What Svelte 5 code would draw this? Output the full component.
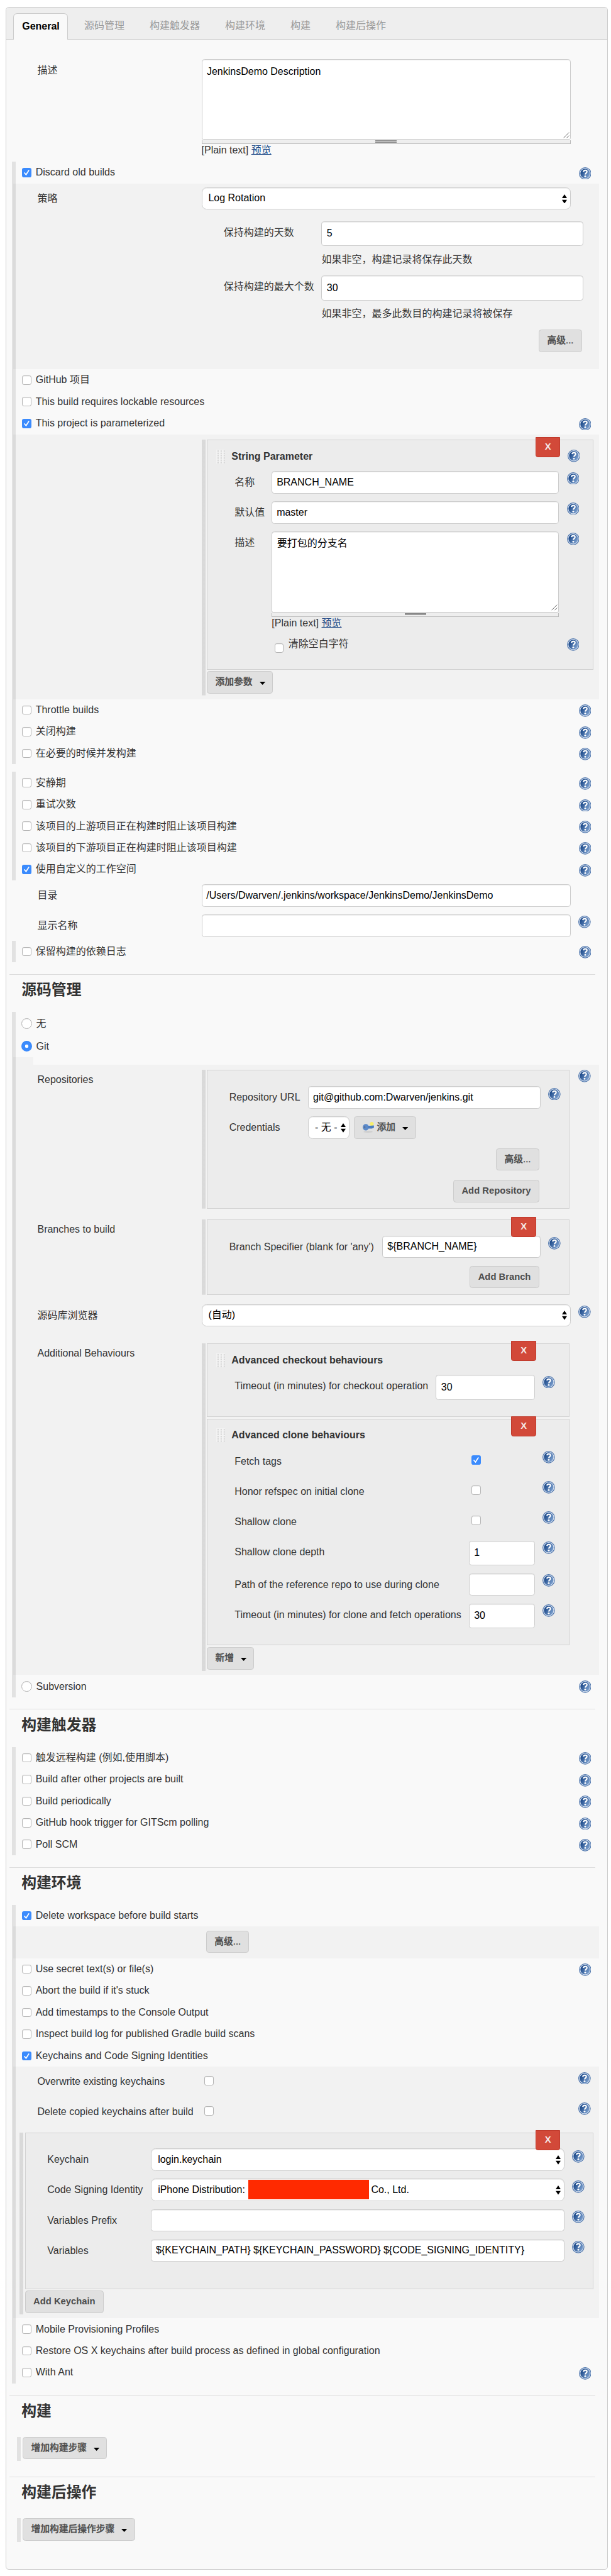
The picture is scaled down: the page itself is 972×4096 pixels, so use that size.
<script>
  const tabs = ['源码管理', '构建触发器', '构建环境', '构建', '构建后操作'];
  const concurrency = ['Throttle builds', '关闭构建', '在必要的时候并发构建'];
  const advanced = [
    { text: '安静期' },
    { text: '重试次数' },
    { text: '该项目的上游项目正在构建时阻止该项目构建' },
    { text: '该项目的下游项目正在构建时阻止该项目构建' },
    { text: '使用自定义的工作空间', on: true }
  ];
  const triggers = [
    '触发远程构建 (例如,使用脚本)',
    'Build after other projects are built',
    'Build periodically',
    'GitHub hook trigger for GITScm polling',
    'Poll SCM'
  ];
</script>

{#snippet help()}
  <svg class="help" viewBox="0 0 32 32">
    <defs>
      <linearGradient id="hg" x1="0" y1="0.2" x2="1" y2="0.8">
        <stop offset="0.15" stop-color="#1f4c8c" />
        <stop offset="1" stop-color="#86a9d6" />
      </linearGradient>
    </defs>
    <circle cx="16" cy="16" r="16" fill="#4a72aa" />
    <circle cx="16" cy="16" r="13.2" fill="url(#hg)" stroke="#d3deee" stroke-width="2" />
    <path d="M11.6 11.6c.4-2.7 2.2-3.9 4.6-3.9 2.6 0 4.5 1.4 4.5 3.8 0 3.2-4.3 3.4-4.3 7.2" fill="none" stroke="#fff" stroke-width="3.4" />
    <circle cx="16.2" cy="23.3" r="2.3" fill="#fff" />
  </svg>
{/snippet}

{#snippet box(on)}
  <span class="cb" class:on>
    {#if on}
      <svg viewBox="0 0 24 24"><path d="M6.5 13l4 4.6L17.5 6.5" fill="none" stroke="#fff" stroke-width="2.8" stroke-linecap="round" /></svg>
    {/if}
  </span>
{/snippet}

{#snippet opt(text, on, h)}
  <div class="opt">
    {@render box(on)}
    <span class="opt-text">{text}</span>
    {#if h}{@render help()}{/if}
  </div>
{/snippet}

{#snippet radio(text, on, h)}
  <div class="opt radio">
    <span class="rd" class:on></span>
    <span class="opt-text">{text}</span>
    {#if h}{@render help()}{/if}
  </div>
{/snippet}

{#snippet caret()}
  <svg class="caret" viewBox="0 0 15 8"><path d="M0 0h15L7.5 8z" /></svg>
{/snippet}

{#snippet arrows()}
  <svg class="arrows" viewBox="0 0 13 24"><path d="M0 9.8L6.5 0 13 9.8zM0 14.2L6.5 24 13 14.2z" /></svg>
{/snippet}

{#snippet select(text)}
  <div class="input select">{text}{@render arrows()}</div>
{/snippet}

{#snippet area(text)}
  <div class="area-wrap">
    <div class="area">
      {text}
      <svg class="grab" viewBox="0 0 16 16"><path d="M1 15L15 1M9 15l6-6" stroke="#666" stroke-width="1.6" /></svg>
    </div>
    <div class="strip"><i></i></div>
    <div class="plain">[Plain text] <a href="#preview">预览</a></div>
  </div>
{/snippet}

{#snippet head(text, h)}
  <div class="head">
    <span class="grip"></span>
    <b>{text}</b>
    {#if h}{@render help()}{/if}
  </div>
{/snippet}

{#snippet field(label, value, kind)}
  <div class="field {kind}">
    <span class="lbl">{label}</span>
    <div class="input">{value}</div>
    {@render help()}
  </div>
{/snippet}

{#snippet checkField(label, on)}
  <div class="field check">
    <span class="lbl">{label}</span>
    <div class="slot">{@render box(on)}</div>
    {@render help()}
  </div>
{/snippet}

<div class="panel">
  <nav class="tabs">
    <span class="tab active">General</span>
    {#each tabs as t}<span class="tab">{t}</span>{/each}
  </nav>

  <div class="field main first">
    <span class="lbl">描述</span>
    {@render area('JenkinsDemo Description')}
  </div>

  <div class="group">
    {@render opt('Discard old builds', true, true)}
    <div class="sub rotation">
      <div class="field main">
        <span class="lbl">策略</span>
        {@render select('Log Rotation')}
      </div>
      <div class="keep">
        <span class="lbl">保持构建的天数</span>
        <div><div class="input tall">5</div><p>如果非空，构建记录将保存此天数</p></div>
      </div>
      <div class="keep">
        <span class="lbl">保持构建的最大个数</span>
        <div><div class="input tall">30</div><p>如果非空，最多此数目的构建记录将被保存</p></div>
      </div>
      <div class="right"><span class="btn cjk">高级...</span></div>
    </div>
    {@render opt('GitHub 项目', false, false)}
    {@render opt('This build requires lockable resources', false, false)}
    {@render opt('This project is parameterized', true, true)}
    <div class="sub params">
      <div class="rep">
        <div class="box param-box">
          <span class="x">X</span>
          {@render head('String Parameter', true)}
          {@render field('名称', 'BRANCH_NAME', '')}
          {@render field('默认值', 'master', '')}
          <div class="field desc">
            <span class="lbl">描述</span>
            {@render area('要打包的分支名')}
            {@render help()}
          </div>
          <div class="field check trim">
            <span class="lbl"></span>
            <div class="slot">{@render box(false)}<span class="trim-text">清除空白字符</span></div>
            {@render help()}
          </div>
        </div>
        <span class="btn cjk">添加参数 {@render caret()}</span>
      </div>
    </div>
    {#each concurrency as c}{@render opt(c, false, true)}{/each}
  </div>

  <div class="group spaced">
    {#each advanced as a}{@render opt(a.text, a.on, true)}{/each}
  </div>

  <div class="pair">
    <div class="field main">
      <span class="lbl">目录</span>
      <div class="input">/Users/Dwarven/.jenkins/workspace/JenkinsDemo/JenkinsDemo</div>
    </div>
    {@render field('显示名称', '', 'main')}
  </div>

  <div class="group">{@render opt('保留构建的依赖日志', false, true)}</div>

  <h2>源码管理</h2>
  <div class="group">
    {@render radio('无', false, false)}
    {@render radio('Git', true, false)}
    <div class="sub stub"></div>
    <div class="sub git">
      <div class="line repos">
        <span class="lbl">Repositories</span>
        <div class="rep">
          <div class="box repo-box">
            {@render field('Repository URL', 'git@github.com:Dwarven/jenkins.git', '')}
            <div class="field">
              <span class="lbl">Credentials</span>
              {@render select('- 无 -')}
              <span class="btn cjk add">
                <svg class="key" viewBox="0 0 30 28">
                  <ellipse cx="14" cy="25.5" rx="12" ry="2" fill="#ccc" />
                  <circle cx="23.5" cy="5" r="5" fill="#f7ef6b" />
                  <ellipse cx="8" cy="13.5" rx="8" ry="8.3" fill="#5c8ac9" />
                  <path d="M13 10l16-1v6l-5 2-9 0z" fill="#4a7cc0" />
                  <ellipse cx="5" cy="13.5" rx="2" ry="3" fill="#5d7295" />
                </svg>添加 {@render caret()}
              </span>
            </div>
            <div class="right"><span class="btn cjk">高级...</span></div>
            <div class="right"><span class="btn">Add Repository</span></div>
          </div>
        </div>
        {@render help()}
      </div>
      <div class="line">
        <span class="lbl">Branches to build</span>
        <div class="rep">
          <div class="box branch-box">
            <span class="x">X</span>
            {@render field("Branch Specifier (blank for 'any')", '${BRANCH_NAME}', '')}
            <div class="right"><span class="btn">Add Branch</span></div>
          </div>
        </div>
      </div>
      <div class="field main browser">
        <span class="lbl">源码库浏览器</span>
        {@render select('(自动)')}
        {@render help()}
      </div>
      <div class="line">
        <span class="lbl">Additional Behaviours</span>
        <div class="rep extra">
          <div class="box checkout-box">
            <span class="x">X</span>
            {@render head('Advanced checkout behaviours', false)}
            {@render field('Timeout (in minutes) for checkout operation', '30', 'tall-row')}
          </div>
          <div class="box clone-box">
            <span class="x">X</span>
            {@render head('Advanced clone behaviours', false)}
            {@render checkField('Fetch tags', true)}
            {@render checkField('Honor refspec on initial clone', false)}
            {@render checkField('Shallow clone', false)}
            {@render field('Shallow clone depth', '1', 'tall-row')}
            {@render field('Path of the reference repo to use during clone', '', '')}
            {@render field('Timeout (in minutes) for clone and fetch operations', '30', 'tall-row')}
          </div>
          <span class="btn cjk">新增 {@render caret()}</span>
        </div>
      </div>
    </div>
    {@render radio('Subversion', false, true)}
  </div>

  <h2>构建触发器</h2>
  <div class="group">
    {#each triggers as t}{@render opt(t, false, true)}{/each}
  </div>

  <h2>构建环境</h2>
  <div class="group">
    {@render opt('Delete workspace before build starts', true, false)}
    <div class="sub wipe"><span class="btn cjk">高级...</span></div>
    {@render opt('Use secret text(s) or file(s)', false, true)}
    {@render opt("Abort the build if it's stuck", false, false)}
    {@render opt('Add timestamps to the Console Output', false, false)}
    {@render opt('Inspect build log for published Gradle build scans', false, false)}
    {@render opt('Keychains and Code Signing Identities', true, false)}
    <div class="sub keychains">
      <div class="main-checks">
        {@render checkField('Overwrite existing keychains', false)}
        {@render checkField('Delete copied keychains after build', false)}
      </div>
      <div class="rep">
        <div class="box keychain-box">
          <span class="x">X</span>
          <div class="field">
            <span class="lbl">Keychain</span>
            {@render select('login.keychain')}
            {@render help()}
          </div>
          <div class="field">
            <span class="lbl">Code Signing Identity</span>
            <div class="input select"><span class="who">iPhone Distribution:</span><i class="redact"></i>Co., Ltd.{@render arrows()}</div>
            {@render help()}
          </div>
          {@render field('Variables Prefix', '', '')}
          {@render field('Variables', '${KEYCHAIN_PATH} ${KEYCHAIN_PASSWORD} ${CODE_SIGNING_IDENTITY}', '')}
        </div>
        <span class="btn">Add Keychain</span>
      </div>
    </div>
    {@render opt('Mobile Provisioning Profiles', false, false)}
    {@render opt('Restore OS X keychains after build process as defined in global configuration', false, false)}
    {@render opt('With Ant', false, true)}
  </div>

  <h2>构建</h2>
  <div class="steps"><span class="btn cjk">增加构建步骤 {@render caret()}</span></div>

  <h2>构建后操作</h2>
  <div class="steps"><span class="btn cjk">增加构建后操作步骤 {@render caret()}</span></div>
</div>

<style>
  :global(html) { font-size: 6.1575px; background: #fff; }
  :global(body) { margin: 0; font-size: 2.6rem; }
  :global(#app) { display: flow-root; }
  * { box-sizing: border-box; }
  .panel {
    font-family: "Liberation Sans", "Noto Sans CJK SC", sans-serif;
    font-size: 2.6rem;
    line-height: 3.4rem;
    color: #333;
    width: 155.6rem;
    height: 661.8rem;
    margin: 1.8rem 0 0 1.4rem;
    background: #f9f9f9;
    border: .2rem solid #ccc;
    border-radius: .8rem;
    white-space: nowrap;
    overflow: hidden;
  }
  .tabs { display: flex; align-items: flex-end; gap: 2.1rem; height: 8.3rem; padding-left: 1.9rem; background: #eee; box-shadow: inset 0 -1px #ccc; }
  .tab { height: 6.8rem; line-height: 6.6rem; padding: 0 2.2rem; color: #999; }
  .tab.active { width: 14rem; padding: 0 0 0 2.1rem; border: 1px solid #ccc; border-bottom: 0; border-radius: 1rem 1rem 0 0; background: #f9f9f9; color: #000; font-weight: 700; }

  .field { display: flex; align-items: flex-start; height: 7.8rem; }
  .lbl { flex: none; line-height: 6rem; height: 6rem; padding-left: .2rem; }
  .input {
    position: relative;
    display: flex;
    align-items: center;
    flex: none;
    height: 5.8rem;
    padding: .1rem 1.1rem 0;
    border: .2rem solid #ccc;
    border-radius: .7rem;
    background: #fff;
    box-shadow: inset 0 1px 1px rgba(0, 0, 0, .07);
    color: #000;
  }
  .tall, .tall-row .input { height: 6.4rem; padding-left: 1.2rem; }
  .tall-row { height: 8.4rem; }
  .select { border-radius: 1.2rem; padding-left: 1.6rem; }
  .arrows { position: absolute; right: .8rem; top: 1.6rem; width: 1.3rem; height: 2.4rem; }
  .help { flex: none; width: 3.2rem; height: 3.2rem; margin: .2rem 0 0 2rem; }

  .area-wrap { flex: none; }
  .area { position: relative; height: 20.8rem; padding: 1.2rem 1.2rem; border: .2rem solid #ccc; border-radius: .7rem .7rem .4rem .4rem; background: #fff; box-shadow: inset 0 1px 1px rgba(0, 0, 0, .07); color: #000; }
  .grab { position: absolute; right: .2rem; bottom: .2rem; width: 1.6rem; height: 1.6rem; }
  .strip { height: 1rem; border: .2rem solid #bbb; border-top: 0; background: #eee; }
  .strip i { display: block; width: 5.5rem; height: .6rem; margin: 1px auto 0; border-top: 1px solid #888; border-bottom: 1px solid #888; background: #bbb; }
  a { color: #204a87; text-decoration: underline; text-underline-offset: .2rem; }

  .main { padding-left: 7.9rem; }
  .main .lbl { width: 42.6rem; }
  .main .input, .main .area-wrap { width: 95.4rem; }
  .main .help { margin-top: .4rem; }
  .first { height: 31.5rem; padding-top: 5rem; }
  .first .area { padding-top: 1.4rem; }
  .pair { height: 15.6rem; padding-top: 1rem; }

  .group { margin: 0 2.1rem 0 1.5rem; padding-left: 1rem; background: linear-gradient(#e2e2e2, #e2e2e2) left / 1rem 100% no-repeat; }
  .spaced { margin-top: 2rem; }
  .opt { display: flex; height: 5.6rem; padding: 1.6rem 2rem 0 1.6rem; }
  .opt-text { line-height: 2.4rem; margin: .05rem 0 0 1.15rem; }
  .opt .help { margin: -.2rem 0 0 auto; }
  .cb { display: block; flex: none; width: 2.4rem; height: 2.4rem; border: 1px solid #b4b4b4; border-radius: .5rem; background: #fff; box-shadow: inset 0 1px 1px rgba(0, 0, 0, .06); }
  .cb.on { border: 0; background: #3b8bfd; box-shadow: none; }
  .cb svg { display: block; width: 100%; height: 100%; }
  .radio { height: 5.8rem; padding-left: 1.4rem; }
  .radio .opt-text { line-height: 2.8rem; margin: 0 0 0 1.1rem; }
  .rd { width: 2.8rem; height: 2.8rem; border: 1px solid #b4b4b4; border-radius: 50%; background: #fff; box-shadow: inset 0 1px 1px rgba(0, 0, 0, .06); }
  .rd.on { border: 0; background: radial-gradient(circle, #fff 0 .42rem, #3b8bfd .5rem); }

  .sub { margin-left: -.6rem; padding-left: 6rem; background: rgba(0, 0, 0, .026); }
  .sub .main { padding-left: 0; }
  .rotation { height: 48rem; padding-top: 1rem; }
  .rotation .field { height: 8.8rem; }
  .keep { display: flex; height: 14rem; padding-left: 48.1rem; }
  .keep .lbl { width: 25.5rem; }
  .keep .input { width: 67.6rem; }
  .keep p { margin: 1.9rem 0 0; }
  .right { display: flex; justify-content: flex-end; }
  .rotation .right { padding-right: 4.4rem; }

  .btn {
    display: inline-flex;
    align-items: center;
    height: 5.8rem;
    padding: 0 2rem .1rem;
    border: .2rem solid #ccc;
    border-radius: .7rem;
    background: #e0e0e0;
    color: #4d4d4d;
    font-size: 2.4rem;
    font-weight: 700;
    vertical-align: top;
  }
  .btn.cjk { font-weight: 500; -webkit-text-stroke: .35px #4d4d4d; }
  .caret { width: 1.5rem; height: .8rem; margin: .6rem -.2rem 0 1.8rem; fill: #000; }

  .rep { padding: 0 0 .4rem 1.4rem; background: linear-gradient(rgba(0, 0, 0, .1), rgba(0, 0, 0, .1)) left / 1rem 100% no-repeat; }
  .box { position: relative; border: .2rem solid #d2d2d2; background: #ececec; margin-bottom: .4rem; }
  .x { position: absolute; z-index: 1; top: -.8rem; right: 8.4rem; width: 6.4rem; height: 5.2rem; line-height: 4.8rem; text-align: center; font-size: 2.4rem; font-weight: 700; color: #f5e9e7; background: #d24939; border: .2rem solid #bf392b; border-radius: 0 0 .6rem .6rem; }
  .head { display: flex; align-items: center; height: 8rem; padding: .4rem 3.4rem 0 2.2rem; color: #333; }
  .head b { margin-left: 1.6rem; }
  .head .help { margin: -.3rem 0 0 auto; }
  .grip { width: 2.4rem; height: 3.6rem; background: radial-gradient(circle at 60% 60%, #d0d0d0 0 .12rem, transparent .24rem) 0 0 / .8rem .6rem, #f3f3f3; }

  .params { height: 68.4rem; padding: 1.4rem 1.4rem 0 48.6rem; }
  .param-box { height: 59.4rem; }
  .param-box .field { padding-left: 6.8rem; }
  .param-box .lbl { width: 9.8rem; }
  .param-box .input, .param-box .area-wrap, .param-box .slot { width: 74.2rem; }
  .param-box .desc { height: 27.4rem; }
  .check .slot { display: flex; padding: 1.4rem 0 0 .7rem; }
  .trim-text { line-height: 3.4rem; margin: -1.4rem 0 0 1.2rem; }

  .stub { width: 5.2rem; height: 2rem; padding: 0; }
  .git { height: 157.6rem; padding-top: 1.4rem; }
  .line { display: flex; align-items: flex-start; }
  .line > .lbl { width: 42.6rem; line-height: 5.2rem; }
  .line .rep { width: 95rem; }
  .line > .rep { padding-bottom: 0; }
  .line > .help { margin: 0 0 0 2.4rem; }
  .line .box { margin-bottom: 0; }
  .repos { margin-bottom: 2.8rem; }
  .repo-box { height: 35.8rem; padding: 4rem 7.6rem 0 5.4rem; }
  .repo-box .lbl { width: 20.6rem; }
  .repo-box .input { width: 60rem; }
  .repo-box .select { width: 10.6rem; }
  .repo-box .help, .branch-box .help { margin-top: .4rem; }
  .repo-box .right { height: 8.2rem; padding-top: .4rem; }
  .add { margin-left: 1.2rem; padding-left: 2.1rem; }
  .key { width: 3rem; height: 2.8rem; margin: 0 .7rem 0 0; }
  .branch-box { height: 19.4rem; padding: 4rem 7.6rem 0 5.4rem; }
  .branch-box .lbl { width: 39.8rem; }
  .branch-box .input { width: 40.8rem; }
  .browser { height: 12.6rem; padding-top: 2.45rem; }
  .extra { height: 84.6rem; }
  .checkout-box { height: 19rem; }
  .line .checkout-box { margin-bottom: .4rem; }
  .clone-box { height: 58.6rem; }
  .line .clone-box { margin-bottom: .4rem; }
  .checkout-box .field, .clone-box .field { padding-left: 6.8rem; }
  .checkout-box .lbl { width: 52.2rem; }
  .checkout-box .input { width: 25.6rem; }
  .clone-box .lbl { width: 60.7rem; }
  .clone-box .input, .clone-box .slot { width: 17.1rem; }

  .wipe { height: 8.2rem; padding: 1rem 0 0 49.8rem; }
  .keychains { height: 65rem; padding-top: 1rem; }
  .main-checks { height: 16rem; }
  .main-checks .lbl { width: 42.6rem; }
  .main-checks .slot { width: 95.4rem; }
  .main-checks .help { margin-top: .4rem; }
  .keychains .rep { margin: 0 1.4rem 0 -4.4rem; }
  .keychain-box { height: 40.4rem; padding: 4rem 0 0 5.4rem; }
  .keychain-box .lbl { width: 27rem; }
  .keychain-box .input { width: 106.8rem; }
  .keychain-box .help { margin-top: .4rem; }
  .who { width: 23.4rem; }
  .redact { width: 31.2rem; height: 5.1rem; margin: -.4rem .5rem 0 0; background: #ff2a00; }

  h2 { height: 9.8rem; margin: 3rem 3.1rem 0 .9rem; padding: 1.4rem 0 0 3.1rem; border-top: .3rem solid #ddd; font-size: 3.87rem; line-height: 5.2rem; font-weight: 700; }
  .steps { height: 6.2rem; margin: 1rem 0 4rem 2.9rem; padding-left: 1.4rem; background: linear-gradient(#e2e2e2, #e2e2e2) left / 1rem 100% no-repeat; }
  .steps + h2 { margin-top: 0; }
</style>
